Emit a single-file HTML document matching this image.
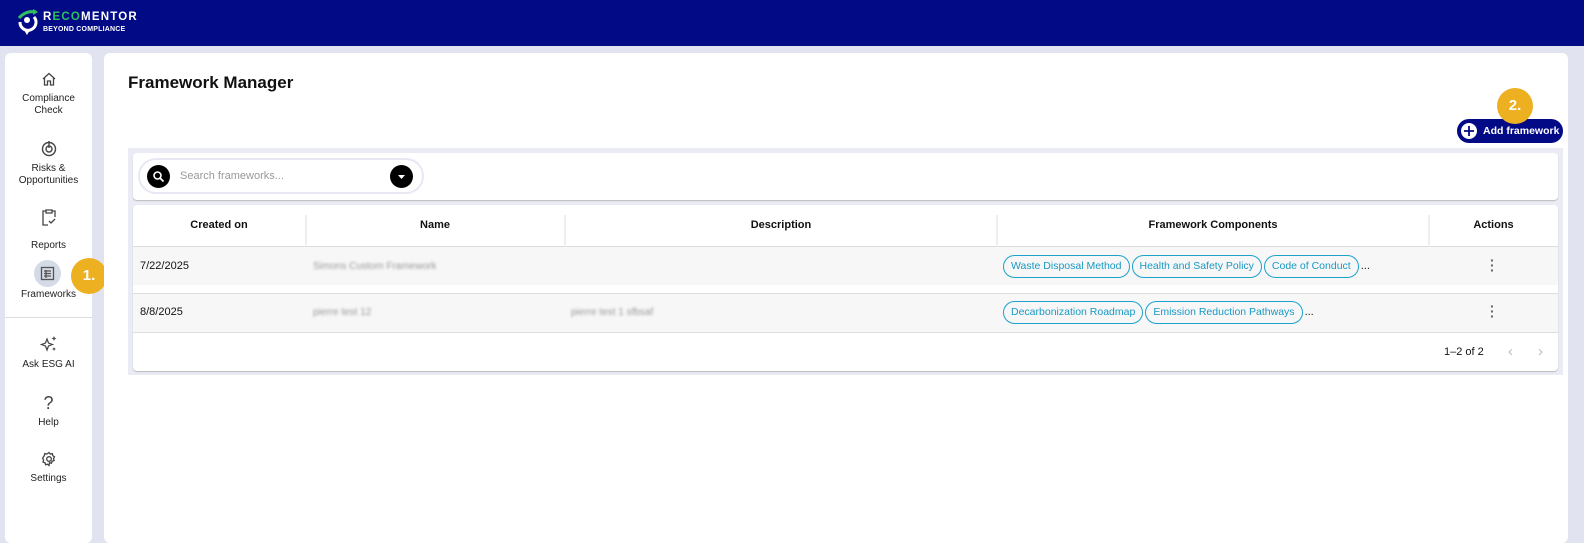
<!DOCTYPE html>
<html><head><meta charset="utf-8"><style>
*{box-sizing:border-box;margin:0;padding:0}
body{width:1584px;height:539px;overflow:hidden;background:#e2e3f0;font-family:"Liberation Sans",Arial,sans-serif;color:#111;position:relative}
.hdr{position:absolute;left:0;top:0;width:1584px;height:46px;background:#020a86}
.side{position:absolute;left:5px;top:53px;width:87px;height:490px;background:#fff;border-radius:6px}
.main{position:absolute;left:104px;top:53px;width:1464px;height:490px;background:#fff;border-radius:6px}
.nav{position:absolute;left:0;width:87px;text-align:center;font-size:10px;color:#222;line-height:12px}
.nav svg{display:block;margin:0 auto 6px}
.badge{position:absolute;width:36px;height:36px;border-radius:50%;background:#edb020;color:#fff;font-weight:bold;font-size:15px;text-align:center;line-height:36px}
.abs{position:absolute}
.th{position:absolute;top:0;height:41px;line-height:41px;font-size:11px;font-weight:bold;text-align:center}
.sep{position:absolute;top:10px;width:2px;height:30px;background:#eee}
.chip{display:inline-block;border:1px solid #1ba3cc;color:#1899c4;border-radius:12px;height:23px;line-height:21px;padding:0 7px;font-size:10.5px;margin-right:2px}
.blur{color:#999;filter:blur(1.2px);font-size:10px}
</style></head><body>
<div class="hdr">
<svg class="abs" style="left:16px;top:8px" width="24" height="28" viewBox="0 0 24 28"><path d="M4 14a8 8 0 1 0 14-5" stroke="#fff" stroke-width="3" fill="none"/><path d="M3 10 Q10 2 20 4" stroke="#2fbf5f" stroke-width="3" fill="none"/><path d="M17 1l5 3-5 3z" fill="#2fbf5f"/><circle cx="11" cy="12" r="3" fill="#fff"/><path d="M8 22l3 5 3-5z" fill="#fff"/></svg>
<div class="abs" style="left:43px;top:11px;font-size:11.5px;font-weight:bold;letter-spacing:1.2px;color:#fff">R<span style="color:#2fbf5f">ECO</span>MENTOR</div>
<div class="abs" style="left:43px;top:26px;font-size:7px;font-weight:bold;color:#fff;letter-spacing:.2px">BEYOND COMPLIANCE</div>
</div>
<div class="side">
<div class="nav" style="top:18px"><svg width="16" height="16" viewBox="0 0 16 16" fill="none" stroke="#444" stroke-width="1.3"><path d="M2 8L8 2.5 14 8M3.5 6.5V14h3v-4h3v4h3V6.5"/></svg>Compliance<br>Check</div>
<div class="nav" style="top:86px"><svg width="18" height="18" viewBox="0 0 18 18" fill="none" stroke="#444" stroke-width="1.4"><circle cx="9" cy="10" r="6.5"/><circle cx="9" cy="10" r="3"/><path d="M9 2v7"/></svg>Risks &amp;<br>Opportunities</div>
<div class="nav" style="top:155px"><svg width="16" height="18" viewBox="0 0 16 18" fill="none" stroke="#444" stroke-width="1.3" style="margin-bottom:14px"><path d="M5 3H2v14h5M11 3h3v6M5 2h6v3H5z"/><path d="M8 13l2 2 4-4"/></svg>Reports</div>
<div style="position:absolute;left:29px;top:207px;width:27px;height:27px;border-radius:50%;background:#d4dae6"></div>
<svg class="abs" style="left:35px;top:213px" width="15" height="15" viewBox="0 0 15 15" fill="none" stroke="#555" stroke-width="1.3"><rect x="1.5" y="1.5" width="12" height="12"/><path d="M4 5h7M4 7.5h7M4 10h7M6 4v8"/></svg>
<div class="nav" style="top:236px">Frameworks</div>
<div style="position:absolute;left:0;top:264px;width:87px;height:1px;background:#ddd"></div>
<div class="nav" style="top:282px"><svg width="18" height="18" viewBox="0 0 18 18" fill="#444"><path d="M7 4l1.5 4 4 1.5-4 1.5L7 15l-1.5-4-4-1.5 4-1.5z" fill="none" stroke="#444" stroke-width="1.2"/><path d="M14 1l.7 1.8 1.8.7-1.8.7L14 6l-.7-1.8-1.8-.7 1.8-.7zM14 12l.6 1.4 1.4.6-1.4.6L14 16l-.6-1.4-1.4-.6 1.4-.6z"/></svg>Ask ESG AI</div>
<div class="nav" style="top:340px"><div style="font-size:18px;line-height:20px;color:#444;margin-bottom:4px">?</div>Help</div>
<div class="nav" style="top:398px"><svg width="16" height="16" viewBox="0 0 16 16" fill="none" stroke="#444" stroke-width="1.3"><circle cx="8" cy="8" r="2.3"/><path d="M8 1.5l1.3 1.6 2-.5.5 2 1.7 1.2-1 1.8.6 2-2 .6-.6 2-2-.5L8 14.5l-1.4-1.3-2 .5-.6-2-2-.6.6-2-1-1.8L3.3 4.6l.5-2 2 .5z"/></svg>Settings</div>
</div>
<div class="badge" style="left:71px;top:258px">1.</div>
<div class="main"></div>
<div class="abs" style="left:128px;top:73px;font-size:17px;font-weight:bold">Framework Manager</div>
<div class="abs" style="left:1457px;top:119px;width:106px;height:24px;border-radius:12px;background:#020a86;color:#fff;font-size:10.5px;font-weight:bold;line-height:24px;padding-left:26px">Add framework</div>
<svg class="abs" style="left:1460px;top:122px" width="18" height="18" viewBox="0 0 18 18"><circle cx="9" cy="9" r="8" fill="#fff"/><path d="M9 4v10M4 9h10" stroke="#020a86" stroke-width="1.8"/></svg>
<div class="badge" style="left:1497px;top:88px">2.</div>
<div class="abs" style="left:128px;top:148px;width:1435px;height:227px;background:#eaebf4"></div>
<div class="abs" style="left:133px;top:153px;width:1425px;height:47px;background:#fff;border-radius:4px;box-shadow:0 1px 1px #bbb"></div>
<div class="abs" style="left:138px;top:158px;width:286px;height:36px;border:2px solid #e8e8f5;border-radius:18px"></div>
<svg class="abs" style="left:147px;top:165px" width="23" height="23" viewBox="0 0 23 23"><circle cx="11.5" cy="11.5" r="11.5" fill="#000"/><circle cx="10.5" cy="10.5" r="3.5" fill="none" stroke="#fff" stroke-width="1.6"/><path d="M13 13l3.5 3.5" stroke="#fff" stroke-width="1.8"/></svg>
<div class="abs" style="left:180px;top:170px;font-size:11px;color:#999">Search frameworks...</div>
<svg class="abs" style="left:390px;top:165px" width="23" height="23" viewBox="0 0 23 23"><circle cx="11.5" cy="11.5" r="11.5" fill="#000"/><path d="M8 10h7l-3.5 4z" fill="#fff"/></svg>
<div class="abs" style="left:133px;top:205px;width:1425px;height:166px;background:#fff;border-radius:4px;box-shadow:0 1px 1px #bbb">
<div class="th" style="left:0;width:172px">Created on</div>
<div class="sep" style="left:172px"></div>
<div class="th" style="left:172px;width:260px">Name</div>
<div class="sep" style="left:431px"></div>
<div class="th" style="left:432px;width:432px">Description</div>
<div class="sep" style="left:863px"></div>
<div class="th" style="left:864px;width:432px">Framework Components</div>
<div class="sep" style="left:1295px"></div>
<div class="th" style="left:1296px;width:129px">Actions</div>
<div class="abs" style="left:0;top:41px;width:1425px;height:1px;background:#ddd"></div>
<div class="abs" style="left:0;top:42px;width:1425px;height:38px;background:#f7f7f7"></div>
<div class="abs" style="left:0;top:88px;width:1425px;height:1px;background:#ddd"></div>
<div class="abs" style="left:0;top:89px;width:1425px;height:38px;background:#f7f7f7"></div>
<div class="abs" style="left:0;top:127px;width:1425px;height:1px;background:#ddd"></div>
<div class="abs" style="left:7px;top:55px;font-size:11px">7/22/2025</div>
<div class="abs blur" style="left:180px;top:56px">Simons Custom Framework</div>
<div class="abs" style="left:870px;top:50px;white-space:nowrap;font-size:11px"><span class="chip">Waste Disposal Method</span><span class="chip">Health and Safety Policy</span><span class="chip">Code of Conduct</span>...</div>
<div class="abs" style="left:1357px;top:53px;font-size:14px;line-height:5px;color:#666;font-weight:bold">·<br>·<br>·</div>
<div class="abs" style="left:7px;top:101px;font-size:11px">8/8/2025</div>
<div class="abs blur" style="left:180px;top:102px">pierre test 12</div>
<div class="abs blur" style="left:438px;top:102px">pierre test 1 sfbsaf</div>
<div class="abs" style="left:870px;top:96px;white-space:nowrap;font-size:11px"><span class="chip">Decarbonization Roadmap</span><span class="chip">Emission Reduction Pathways</span>...</div>
<div class="abs" style="left:1357px;top:99px;font-size:14px;line-height:5px;color:#666;font-weight:bold">·<br>·<br>·</div>
<div class="abs" style="left:1311px;top:141px;font-size:11px">1–2 of 2</div>
<div class="abs" style="left:1375px;top:138px;font-size:15px;color:#bbb">‹</div>
<div class="abs" style="left:1405px;top:138px;font-size:15px;color:#bbb">›</div>
</div>
</body></html>
